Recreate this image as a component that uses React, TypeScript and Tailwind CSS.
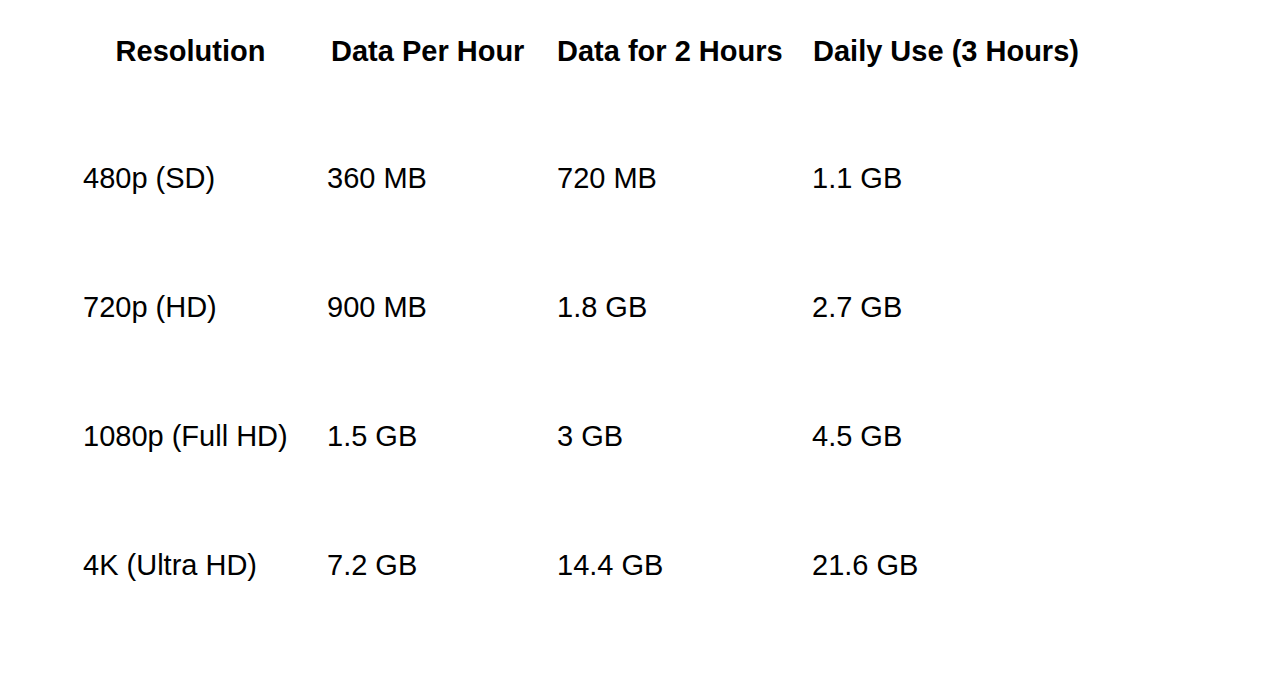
import React from 'react';

const rows = [
  ['480p (SD)', '360 MB', '720 MB', '1.1 GB'],
  ['720p (HD)', '900 MB', '1.8 GB', '2.7 GB'],
  ['1080p (Full HD)', '1.5 GB', '3 GB', '4.5 GB'],
  ['4K (Ultra HD)', '7.2 GB', '14.4 GB', '21.6 GB'],
];

const App = () => {
  return (
    <div className="w-[1279px] h-[673px] bg-white text-black font-['Liberation_Sans',Arial,sans-serif] text-[29px] leading-[33px] pt-[35px] pl-[83px]">
      <div className="grid grid-cols-[244px_230px_255px_1fr] font-bold">
        <div className="w-[215px] text-center">Resolution</div>
        <div className="pl-[4px]">Data Per Hour</div>
        <div>Data for 2 Hours</div>
        <div className="pl-px">Daily Use (3 Hours)</div>
      </div>
      <div className="mt-[94px] flex flex-col gap-[96px]">
        {rows.map((r) => (
          <div key={r[0]} className="grid grid-cols-[244px_230px_255px_1fr]">
            <div>{r[0]}</div>
            <div>{r[1]}</div>
            <div>{r[2]}</div>
            <div>{r[3]}</div>
          </div>
        ))}
      </div>
    </div>
  );
};

export default App;
